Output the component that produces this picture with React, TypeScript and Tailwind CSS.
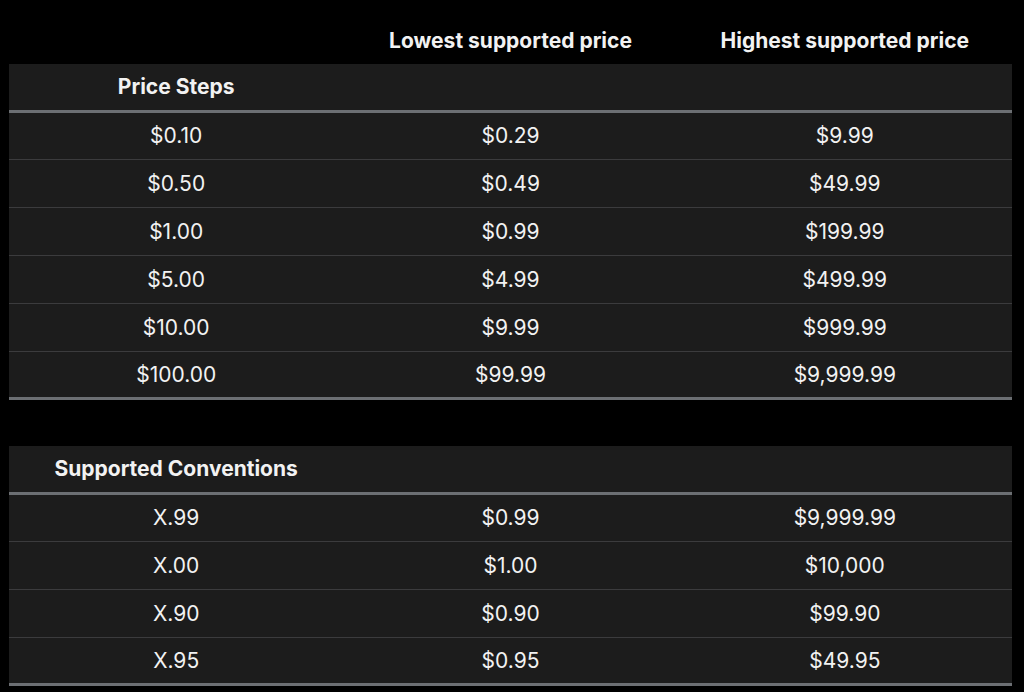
const steps = [
  ["$0.10", "$0.29", "$9.99"],
  ["$0.50", "$0.49", "$49.99"],
  ["$1.00", "$0.99", "$199.99"],
  ["$5.00", "$4.99", "$499.99"],
  ["$10.00", "$9.99", "$999.99"],
  ["$100.00", "$99.99", "$9,999.99"],
];

const conventions = [
  ["X.99", "$0.99", "$9,999.99"],
  ["X.00", "$1.00", "$10,000"],
  ["X.90", "$0.90", "$99.90"],
  ["X.95", "$0.95", "$49.95"],
];

function PriceTable({ title, rows }: { title: string; rows: string[][] }) {
  return (
    <div className="bg-[#1c1c1c] border-b-[3px] border-[#6c6f73]">
      <div className="grid grid-cols-3 h-[49px] items-center border-b-[3px] border-[#6c6f73]">
        <div className="text-center font-bold text-[21px] whitespace-nowrap">{title}</div>
      </div>
      {rows.map((row, i) => {
        const first = i === 0;
        const last = i === rows.length - 1;
        return (
          <div
            key={i}
            className={
              first
                ? "grid grid-cols-3 items-center h-[46px]"
                : last
                ? "grid grid-cols-3 items-center h-[46px] border-t border-[#3b3b3d]"
                : "grid grid-cols-3 items-center h-[48px] border-t border-[#3b3b3d]"
            }
          >
            {row.map((cell, j) => (
              <div key={j} className="text-center text-[21px]">
                {cell}
              </div>
            ))}
          </div>
        );
      })}
    </div>
  );
}

export default function App() {
  return (
    <div
      className="w-[1024px] h-[692px] bg-black text-[#f2f2f2] overflow-hidden"
      style={{ fontFamily: "Inter, 'Noto Sans', sans-serif" }}
    >
      <div className="ml-[9px] w-[1003px]">
        <div className="grid grid-cols-3 h-[64px] items-center pt-[17px]">
          <div />
          <div className="text-center font-bold text-[21px]">Lowest supported price</div>
          <div className="text-center font-bold text-[21px]">Highest supported price</div>
        </div>
        <PriceTable title="Price Steps" rows={steps} />
        <div className="h-[46px]" />
        <PriceTable title="Supported Conventions" rows={conventions} />
      </div>
    </div>
  );
}
